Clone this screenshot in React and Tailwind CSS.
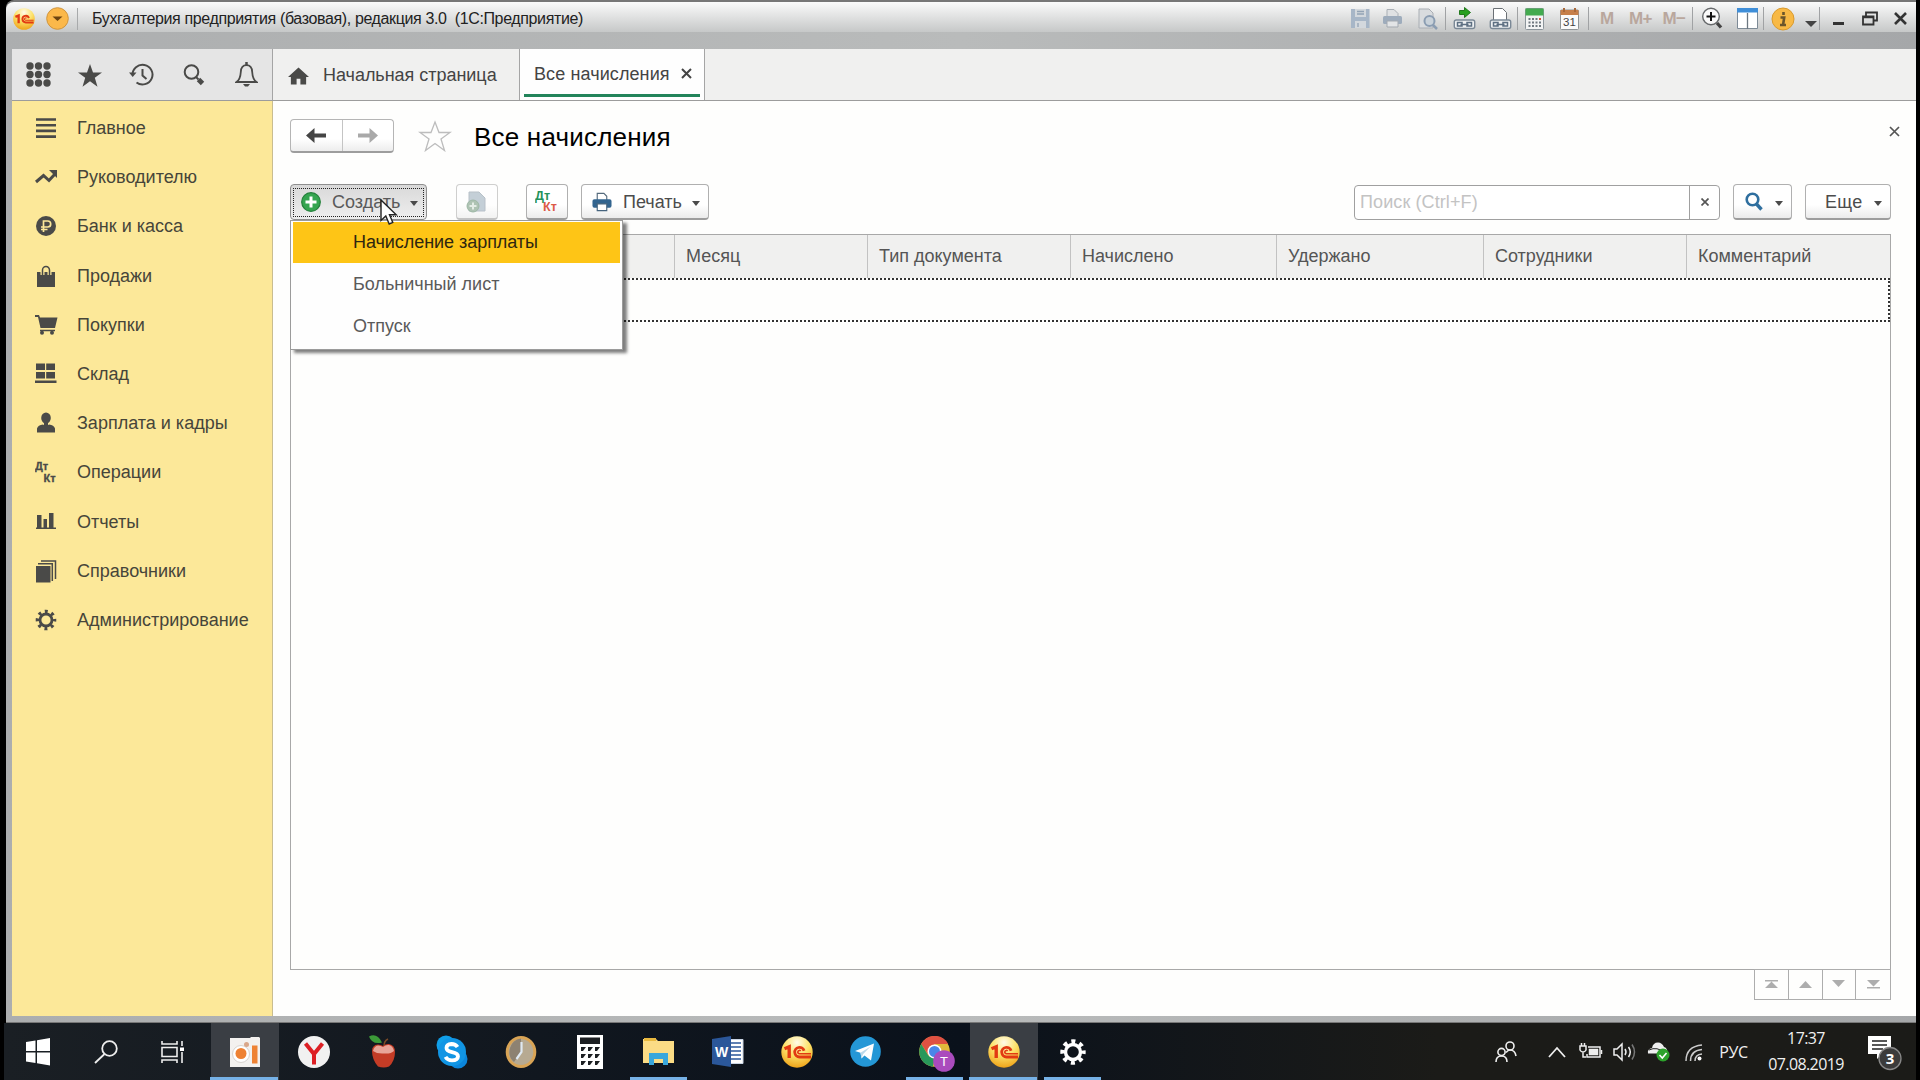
const TextIcon = ({ children, className = '' }) => (
  <span className={`leading-none font-bold ${className}`}>{children}</span>
)

const Logo1C = ({ size }) => (
  <svg width={size} height={size} viewBox="0 0 32 32">
    <defs>
      <radialGradient id="gold" cx="50%" cy="20%" r="80%">
        <stop offset="0" stopColor="#fffbe8" />
        <stop offset=".5" stopColor="#fde26a" />
        <stop offset="1" stopColor="#efa41a" />
      </radialGradient>
    </defs>
    <circle cx="16" cy="16" r="15.700" fill="url(#gold)" />
    <path d="M3.500 12.800 8.200 10.800V22" fill="none" stroke="#e23a12" strokeWidth="3.400" />
    <path d="M30 21H18.500a4.800 4.800 0 1 1 4.600-6.300" fill="none" stroke="#e23a12" strokeWidth="2.800" />
    <path d="M30 17.800H18.500a1.700 1.700 0 1 1 1.200-2.900" fill="none" stroke="#e23a12" strokeWidth="1.600" />
  </svg>
)

const Sep = () => <div className="h-[23px] w-px bg-[#a0a2a4]" />

const Cell = ({ w, children }) => (
  <div className={`flex shrink-0 items-center justify-center ${w}`}>{children}</div>
)

const SaveIcon = () => (
  <svg width="21" height="21" viewBox="0 0 21 21">
    <path d="M1 1h18.500v19H1z" fill="#a7b6c7" />
    <path d="M5 1h11v8H5zM5 13h11v7H5z" fill="#d3d8dd" />
    <path d="M7 3.500h7M7 6h7M8 15v4" stroke="#93a3b5" strokeWidth="1.300" />
  </svg>
)

const PrintGray = () => (
  <svg width="21" height="21" viewBox="0 0 21 21">
    <path d="M5 9V1.500h7l4 4V9" fill="#dfe1e3" stroke="#a9afb5" />
    <rect x="1" y="8" width="19" height="8" rx="1.500" fill="#9eacbc" />
    <path d="M5 13h11v6H5z" fill="#e2e4e6" stroke="#a3a9b0" />
  </svg>
)

const PreviewIcon = () => (
  <svg width="21" height="22" viewBox="0 0 21 22">
    <path d="M2 1h10l4 4v15H2z" fill="#d9dcdf" stroke="#a9aeb4" />
    <circle cx="12.500" cy="13" r="5" fill="#c9d2da" stroke="#8b9db2" strokeWidth="2" />
    <path d="m16 17 4 4" stroke="#8b9db2" strokeWidth="2.500" />
  </svg>
)

const ChainLinks = () => (
  <g>
    <rect x=".8" y="13" width="20.400" height="8.500" rx="2" fill="#eef0f2" stroke="#7a8896" strokeWidth="1.400" />
    <path d="M4 15.500h4.500v3.500H4zM13.500 15.500H18v3.500h-4.500zM7 17.500h8" fill="none" stroke="#5d6f82" strokeWidth="1.500" />
  </g>
)

const LinkGo = () => (
  <svg width="23" height="23" viewBox="0 0 22 23">
    <ChainLinks />
    <path d="M6 3.500h5V.500l6 5-6 5v-3H6z" fill="#27a01f" stroke="#167012" strokeWidth=".9" />
  </svg>
)

const LinkPage = () => (
  <svg width="23" height="23" viewBox="0 0 22 23">
    <path d="M4 16V1.500h9l4 4V16" fill="#fff" stroke="#6b7075" />
    <ChainLinks />
  </svg>
)

const CalcIcon = () => (
  <svg width="19" height="22" viewBox="0 0 19 22">
    <rect x=".5" y=".5" width="18" height="21" rx="1" fill="#f3f4f4" stroke="#8c959b" />
    <path d="M.5.500h18v7H.5z" fill="#43aa4f" />
    <path d="M3.500 11h9M3.500 14.500h9M3.500 18h9" stroke="#707980" strokeWidth="2" strokeDasharray="2 1.500" />
    <path d="M14 11h2" stroke="#d9513f" strokeWidth="2" />
    <path d="M14 14.500h2M14 18h2" stroke="#707980" strokeWidth="2" />
  </svg>
)

const CalendarIcon = () => (
  <svg width="19" height="22" viewBox="0 0 19 22">
    <rect x=".5" y="2" width="18" height="19.500" rx="1" fill="#fbfbfb" stroke="#8f9497" />
    <path d="M.5 2h18v5H.5z" fill="#c67f4a" />
    <path d="M4 0v4M15 0v4" stroke="#a8683a" strokeWidth="2" />
    <text x="9.500" y="17.800" textAnchor="middle" fontSize="11.500" fill="#444">31</text>
  </svg>
)

const ZoomIcon = () => (
  <svg width="22" height="23" viewBox="0 0 22 23">
    <circle cx="10" cy="9.500" r="8.300" fill="#fafafa" stroke="#66696b" strokeWidth="1.400" />
    <path d="M10 5v9M5.500 9.500h9" stroke="#111" strokeWidth="2" />
    <path d="m16 16 4 4.500" stroke="#444" strokeWidth="3.300" />
  </svg>
)

const ColumnsIcon = () => (
  <svg width="21" height="21" viewBox="0 0 21 21">
    <path d="M.5.500h20v20H.5z" fill="#fff" stroke="#7d8a96" />
    <path d="M0 0h21v4.500H0z" fill="#3f8ed8" />
    <path d="M10.500 5v16" stroke="#6c7781" strokeWidth="1.300" />
  </svg>
)

const TitleBar = () => (
  <div className="flex h-[30px] items-center rounded-tl-[8px] bg-linear-to-b from-[#fbfbfb] to-[#c6c8c8]">
    <div className="flex items-center pt-[3px] pl-[7px]">
      <Logo1C size={22} />
      <svg className="ml-[11px]" width="23" height="23" viewBox="0 0 23 23">
        <circle cx="11.500" cy="11.500" r="10.800" fill="#fbb84a" stroke="#cf9540" />
        <path d="M6.500 9.500h10l-5 4.500z" fill="#6b4310" />
      </svg>
      <div className="ml-[8px] h-[22px] w-px bg-[#a8aaab]" />
      <span className="ml-[14px] text-[16px] tracking-[-0.370px] whitespace-pre text-[#222]">
        Бухгалтерия предприятия (базовая), редакция 3.0  (1С:Предприятие)
      </span>
    </div>
    <div className="ml-auto flex items-center pt-[3px]">
      <Cell w="w-[31px]"><SaveIcon /></Cell>
      <Cell w="w-[33px]"><PrintGray /></Cell>
      <Cell w="w-[36px]"><PreviewIcon /></Cell>
      <Sep />
      <Cell w="w-[37px]"><LinkGo /></Cell>
      <Cell w="w-[34px]"><LinkPage /></Cell>
      <Sep />
      <Cell w="w-[33px]"><CalcIcon /></Cell>
      <Cell w="w-[37px]"><CalendarIcon /></Cell>
      <Sep />
      <Cell w="w-[36px]"><TextIcon className="text-[17px] text-[#b9a79d]">M</TextIcon></Cell>
      <Cell w="w-[31px]"><TextIcon className="text-[17px] tracking-[-0.500px] text-[#b9a79d]">M+</TextIcon></Cell>
      <Cell w="w-[36px]"><TextIcon className="text-[17px] tracking-[-0.500px] text-[#b9a79d]">M−</TextIcon></Cell>
      <Sep />
      <Cell w="w-[38px]"><ZoomIcon /></Cell>
      <Cell w="w-[32px]"><ColumnsIcon /></Cell>
      <Sep />
      <Cell w="w-[38px]">
        <svg width="24" height="24" viewBox="0 0 24 24">
          <circle cx="12" cy="12" r="11" fill="#f8b945" stroke="#d99a2e" />
          <path d="M12.500 5v3M9.500 10.500h3.700l-1 6.500M9 18h6" stroke="#6b552b" strokeWidth="2.600" fill="none" />
        </svg>
      </Cell>
      <Cell w="w-[17px]">
        <svg className="mt-[10px]" width="12" height="6" viewBox="0 0 12 6"><path d="M0 0h12L6 6z" fill="#444" /></svg>
      </Cell>
      <Sep />
      <Cell w="w-[36px]">
        <svg className="mt-[9px]" width="11" height="3"><path d="M0 0h11v3H0z" fill="#333" /></svg>
      </Cell>
      <Cell w="w-[28px]">
        <svg width="16" height="15" viewBox="0 0 16 15">
          <path d="M4 5V1.500h11v8h-3" fill="none" stroke="#333" strokeWidth="1.800" />
          <path d="M1 5.500h10.500V13.500H1z" fill="none" stroke="#333" strokeWidth="1.800" />
          <path d="M1 6.500h10" stroke="#333" strokeWidth="1.500" />
        </svg>
      </Cell>
      <Cell w="w-[32px]">
        <svg width="13" height="13" viewBox="0 0 13 13"><path d="m1 1 11 11M12 1 1 12" stroke="#333" strokeWidth="2.600" /></svg>
      </Cell>
    </div>
  </div>
)

const TopTabs = () => (
  <div className="flex h-[52px] border-b border-[#9c9c9c] bg-[#f0f0ef]">
    <div className="flex w-[261px] items-center border-r border-[#a5a5a5] bg-[#e5e5e5] text-[#4a4a48]">
      <Cell w="w-[52px]">
        <svg width="25" height="25" viewBox="0 0 25 25" fill="currentColor">
          {[4, 12.500, 21].map((y) => [4, 12.500, 21].map((x) => <circle key={`${x}-${y}`} cx={x} cy={y} r="3.700" />))}
        </svg>
      </Cell>
      <Cell w="w-[52px]">
        <svg className="mt-[2px]" width="24" height="23" viewBox="0 0 24 23" fill="currentColor"><path d="m12 0 3 8.500h9l-7.200 5.200 2.700 9L12 17.200l-7.500 5.500 2.700-9L0 8.500h9z" /></svg>
      </Cell>
      <Cell w="w-[51px]">
        <svg width="25" height="23" viewBox="0 0 25 23" fill="none" stroke="currentColor" strokeWidth="2">
          <path d="M3.500 12a10 9.800 0 1 1 4 7.500" />
          <path d="M0 9.500h7.500L3.700 14z" fill="currentColor" stroke="none" />
          <path d="M13.500 6v6.500l4 3.500" />
        </svg>
      </Cell>
      <Cell w="w-[53px]">
        <svg width="22" height="22" viewBox="0 0 22 22" fill="none" stroke="currentColor">
          <circle cx="8.500" cy="8" r="6.800" strokeWidth="2" />
          <path d="m13 13 2.500 2.500" strokeWidth="2" />
          <path d="m15.500 15.500 4 4" strokeWidth="4.800" />
        </svg>
      </Cell>
      <Cell w="w-[52px]">
        <svg width="23" height="25" viewBox="0 0 23 25" fill="none" stroke="currentColor" strokeWidth="1.800">
          <path d="M1.500 20c3-2 4-5 4.300-10C6 6 8 3.200 11.500 3.200S17 6 17.200 10c.3 5 1.300 8 4.300 10z" />
          <path d="M11.500 0v3" strokeWidth="2.500" />
          <path d="M8 22h7l-2 2.500h-3z" fill="currentColor" stroke="none" />
        </svg>
      </Cell>
    </div>
    <div className="flex w-[247px] items-center border-r border-[#a5a5a5] pt-[2px] pl-[15px] text-[18px] text-[#444]">
      <svg width="21" height="18" viewBox="0 0 22 18"><path d="M11 0 0 10h3v8h6v-6h4v6h6v-8h3z" fill="#4a4a48" /></svg>
      <span className="ml-[14px] tracking-[-0.030px]">Начальная страница</span>
    </div>
    <div className="flex h-full w-[185px] flex-col border-r border-[#a5a5a5] bg-[#fefefe] px-[4px] pb-[3px]">
      <div className="flex flex-1 items-center pt-[6px] pl-[10px] text-[18px] tracking-[0.100px] text-[#444]">
        Все начисления
        <svg className="mb-[2px] ml-[11px]" width="11" height="11" viewBox="0 0 11 11"><path d="m1 1 9 9M10 1l-9 9" stroke="#444" strokeWidth="2" /></svg>
      </div>
      <div className="h-[3px] bg-[#22845a]" />
    </div>
  </div>
)

const MENU = [
  ['Главное', <path key="i" d="M1 2.500h20M1 8.200h20M1 13.900h20M1 19.600h20" stroke="currentColor" strokeWidth="2.600" />],
  ['Руководителю', (
    <g key="i">
      <path d="m1 16 7.500-6.500 5.500 5L20 8" fill="none" stroke="currentColor" strokeWidth="3" />
      <path d="M14 4h8v8z" fill="currentColor" />
    </g>
  )],
  ['Банк и касса', (
    <g key="i">
      <circle cx="11" cy="11" r="10" fill="currentColor" />
      <path d="M8.500 17V6h4.200a3 3 0 0 1 0 6H6M6 14.500h6.500" fill="none" stroke="#fce899" strokeWidth="1.700" />
    </g>
  )],
  ['Продажи', (
    <g key="i">
      <path d="M2 7h18v15H2z" fill="currentColor" />
      <path d="M7.500 10V5a3.500 3.500 0 0 1 7 0v5" fill="none" stroke="#fce899" strokeWidth="4" />
      <path d="M7.500 10V5a3.500 3.500 0 0 1 7 0v5" fill="none" stroke="currentColor" strokeWidth="1.500" />
    </g>
  )],
  ['Покупки', (
    <g key="i">
      <path d="M0 1h4l1 2.500h17.500L20 14H5.500L3 3H0z" fill="currentColor" />
      <path d="M5 16.500h15" stroke="currentColor" strokeWidth="1.500" />
      <circle cx="7" cy="18.800" r="2" fill="currentColor" />
      <circle cx="17" cy="18.800" r="2" fill="currentColor" />
    </g>
  )],
  ['Склад', <path key="i" d="M1 .500h9V7H1zM11.200.500H20V7h-8.800zM1 9h9v6.500H1zM11.200 9H20v6.500h-8.800zM0 17.500h21.500V20H0z" fill="currentColor" />],
  ['Зарплата и кадры', (
    <g key="i" fill="currentColor">
      <ellipse cx="11" cy="6" rx="4.800" ry="5.500" />
      <path d="M9 10h4v4H9z" />
      <path d="M2 20.500v-4Q3 13 8 12.500q3 2.500 6 0 5 .5 6 4v4z" />
    </g>
  )],
  ['Операции', (
    <g key="i" fill="currentColor" stroke="currentColor" strokeWidth=".3" fontSize="11" fontWeight="bold">
      <text x="0" y="8.500">Дт</text>
      <text x="8.500" y="20.500">Кт</text>
    </g>
  )],
  ['Отчеты', <path key="i" d="M2 4h4.500v13H2zM8.500 8H12v9H8.500zM14 2h4.500v15H14zM1 16.500h20v1.600H1z" fill="currentColor" />],
  ['Справочники', (
    <g key="i">
      <path d="M1 6h14.500v16.500H1z" fill="currentColor" />
      <path d="M3 3.800h14.300V21M6 1h14.500v18" fill="none" stroke="currentColor" strokeWidth="1.500" />
    </g>
  )],
  ['Администрирование', (
    <g key="i" stroke="currentColor" fill="none">
      <circle cx="11" cy="11" r="6" strokeWidth="2.800" />
      <circle cx="11" cy="11" r="8.500" strokeWidth="3.600" strokeDasharray="2.900 3.776" strokeDashoffset="1.450" />
    </g>
  )],
]

const Sidebar = () => (
  <nav className="flex w-[261px] flex-col border-r border-[#c9bd90] bg-[#fce899] pt-[3px]">
    {MENU.map(([label, icon]) => (
      <div key={label} className="flex h-[49.200px] items-center pl-[23px] text-[18px] text-[#4a4a48]">
        <svg width="23" height="23" viewBox="0 0 23 23">{icon}</svg>
        <span className="ml-[19px] text-[#46453a]">{label}</span>
      </div>
    ))}
  </nav>
)

const Caret = () => (
  <svg width="8" height="5" viewBox="0 0 8 5"><path d="M0 0h8L4 5z" fill="#4a4a4a" /></svg>
)

const Button = ({ className = '', children }) => (
  <div className={`flex h-[36px] items-center rounded-[4px] border border-b-2 border-[#b0b0b0] border-b-[#9d9d9d] bg-linear-to-b from-white from-60% to-[#ebebeb] text-[18px] text-[#4c4c4c] ${className}`}>
    {children}
  </div>
)

const Cursor = () => (
  <svg className="absolute top-[14px] left-[89px] z-20" width="18" height="27" viewBox="0 0 18 27">
    <path d="M1 1v20.500l4.800-4.500 3.400 8 3.600-1.600L9.500 15.800h6.700z" fill="#fff" stroke="#222" strokeWidth="1.400" />
  </svg>
)

const CreateMenu = () => (
  <div className="absolute top-[35px] left-[-1px] z-10 w-[333px] border border-[#9b9b9b] bg-[#fefefe] px-[2px] pt-px pb-[2px] text-[18px] text-[#5a5a5a] shadow-[4px_3px_3px_rgba(0,0,0,0.5)]">
    <div className="flex h-[41px] items-center bg-[#fec516] pl-[60px] tracking-[-0.050px] text-[#2e2710]">Начисление зарплаты</div>
    <div className="flex h-[42px] items-center pl-[60px]">Больничный лист</div>
    <div className="flex h-[42px] items-center pl-[60px]">Отпуск</div>
  </div>
)

const Heading = () => (
  <div className="flex h-[34px] items-center">
    <div className="flex h-[34px] w-[104px] rounded-[4px] border border-b-2 border-[#b5b5b5] border-b-[#9d9d9d] bg-linear-to-b from-white from-60% to-[#ededed]">
      <div className="flex flex-1 items-center justify-center border-r border-[#c4c4c4]">
        <svg width="20" height="15" viewBox="0 0 20 15"><path d="M0 7.500 8.500 0v5.500H20v4H8.500V15z" fill="#454545" /></svg>
      </div>
      <div className="flex flex-1 items-center justify-center">
        <svg width="20" height="15" viewBox="0 0 20 15"><path d="M20 7.500 11.500 0v5.500H0v4h11.500V15z" fill="#a9a9a9" /></svg>
      </div>
    </div>
    <svg className="ml-[24px]" width="34" height="32" viewBox="0 0 34 32">
      <path d="m17 2 4 10.500h11L23 19l3.500 11.500L17 23.500l-9.500 7L11 19 2 12.500h11z" fill="none" stroke="#bdbdbd" strokeWidth="1.300" />
    </svg>
    <h1 className="mt-[2px] ml-[22px] text-[26px] tracking-[0.200px] text-black">Все начисления</h1>
    <svg className="mr-[16px] mb-[9px] ml-auto" width="11" height="11" viewBox="0 0 11 11"><path d="m1 1 9 9M10 1l-9 9" stroke="#555" strokeWidth="1.700" /></svg>
  </div>
)

const Toolbar = () => (
  <div className="mt-[31px] flex h-[36px] items-center">
    <div className="relative flex h-[36px] w-[137px] items-center rounded-[4px] border border-[#8f8f8f] bg-linear-to-b from-[#d9d9d9] to-[#eeeeee]">
      <div className="m-[2px] flex h-[29px] flex-1 items-center border border-dotted border-[#222] pl-[7px] text-[18px] text-[#5a5a5a]">
        <svg width="20" height="20" viewBox="0 0 20 20">
          <circle cx="10" cy="10" r="9.300" fill="#35a550" stroke="#23803a" strokeWidth="1.200" />
          <path d="M10 4.500v11M4.500 10h11" stroke="#fff" strokeWidth="3" />
        </svg>
        <span className="ml-[11px]">Создать</span>
        <span className="mt-[3px] ml-auto pr-[5px]"><Caret /></span>
      </div>
      <Cursor />
      <CreateMenu />
    </div>
    <Button className="ml-[29px] w-[42px] justify-center opacity-60">
      <svg className="mr-[2px]" width="20" height="22" viewBox="0 0 20 22">
        <path d="M3 1h10l6 6v13H3z" fill="#9fb0bf" stroke="#8999a6" />
        <circle cx="7" cy="15" r="6" fill="#7a9c83" stroke="#5f8a6c" />
        <path d="M7 11.500v7M3.500 15h7" stroke="#d5e2d8" strokeWidth="2" />
      </svg>
    </Button>
    <Button className="ml-[28px] w-[42px] justify-center">
      <svg width="24" height="24" viewBox="0 0 24 24" fontSize="12.500" fontWeight="bold">
        <text x="0" y="9.500" fill="#24925a">Дт</text>
        <text x="8" y="20.500" fill="#dd5a48">Кт</text>
      </svg>
    </Button>
    <Button className="ml-[13px] w-[128px] pl-[10px]">
      <svg width="20" height="20" viewBox="0 0 21 20">
        <path d="M5.500 8V1h7l3 3v4" fill="#fff" stroke="#566b7d" strokeWidth="1.200" />
        <rect x=".5" y="7" width="20" height="9" rx="2" fill="#32648f" />
        <path d="M5.500 12h10v7h-10z" fill="#fff" stroke="#46647e" strokeWidth="1.200" />
      </svg>
      <span className="mt-[2px] ml-[11px]">Печать</span>
      <span className="mt-[3px] ml-auto pr-[8px]"><Caret /></span>
    </Button>
    <div className="ml-auto flex h-[35px] w-[366px] rounded-[4px] border border-[#a0a0a0] bg-white">
      <div className="flex flex-1 items-center border-r border-[#a0a0a0] pl-[5px] text-[18px] tracking-[0.100px] text-[#c3c3c3]">Поиск (Ctrl+F)</div>
      <div className="flex w-[29px] items-center justify-center">
        <svg width="8" height="8" viewBox="0 0 8 8"><path d="m.5.500 7 7M7.500.500l-7 7" stroke="#555" strokeWidth="1.700" /></svg>
      </div>
    </div>
    <Button className="ml-[13px] w-[59px] pl-[11px]">
      <svg width="18" height="19" viewBox="0 0 18 19" fill="none" stroke="#2f6f9f">
        <circle cx="7.500" cy="7.500" r="5.800" strokeWidth="2.600" />
        <path d="m11.500 12 5 5.500" strokeWidth="3.400" />
      </svg>
      <span className="mt-[4px] ml-auto pr-[8px]"><Caret /></span>
    </Button>
    <Button className="mr-[25px] ml-[13px] w-[86px] pl-[19px]">
      <span className="mt-[2px] tracking-[0.300px]">Еще</span>
      <span className="mt-[4px] ml-auto pr-[8px]"><Caret /></span>
    </Button>
  </div>
)

const COLUMNS = [
  ['', 'w-[384px]'],
  ['Месяц', 'w-[193px]'],
  ['Тип документа', 'w-[203px]'],
  ['Начислено', 'w-[206px]'],
  ['Удержано', 'w-[207px]'],
  ['Сотрудники', 'w-[203px]'],
  ['Комментарий', 'flex-1'],
]

const PAGER = [
  'M0 0h13v1.500H0zM6.500 1.500 13 8H0z',
  'M6.500 1 13 8H0z',
  'M0 0h13L6.500 7z',
  'M0 0h13L6.500 6.500zM0 7h13v1.500H0z',
]

const Table = () => (
  <div className="mt-[14px] mr-[25px] flex flex-1 flex-col">
    <div className="flex h-[736px] flex-col border border-[#a8a8a8]">
      <div className="flex h-[43px] bg-[#f0f0ef] text-[18px] text-[#555]">
        {COLUMNS.map(([name, w], i) => (
          <div key={i} className={`flex items-center border-r border-[#c2c2c2] pb-px pl-[11px] last:border-r-0 ${w}`}>{name}</div>
        ))}
      </div>
      <div className="h-[44px] border-2 border-dotted border-[#333]" />
    </div>
    <div className="-mt-px flex justify-end">
      <div className="flex h-[31px] border border-[#adadad]">
        {PAGER.map((d) => (
          <div key={d} className="flex w-[33.750px] items-center justify-center border-r border-[#adadad] last:border-r-0">
            <svg width="13" height="9" viewBox="0 0 13 9"><path d={d} fill="#adadad" /></svg>
          </div>
        ))}
      </div>
    </div>
  </div>
)

const TASKS = [
  { icon: (
    <svg width="30" height="30" viewBox="0 0 30 30">
      <path d="M0 1h20l1-1h8l1 1v29H0z" fill="#f3f1ef" />
      <circle cx="11" cy="17" r="8.500" fill="#fff" stroke="#d8d4d0" />
      <circle cx="11" cy="16.500" r="5.500" fill="#ee8234" />
      <circle cx="16.500" cy="7.500" r="2.500" fill="#d9a78a" />
      <path d="M22 8.500h5.500v18H22z" fill="#ee8234" />
    </svg>
  ), active: true },
  { icon: (
    <svg width="32" height="38" viewBox="0 0 32 38">
      <ellipse cx="16" cy="19" rx="16" ry="16" fill="#f1f1f1" />
      <path d="m7.500 10.500 8.500 10.500 8.500-10.500M16 20v11.500" fill="none" stroke="#dd1f24" strokeWidth="4" />
    </svg>
  ) },
  { icon: (
    <svg width="30" height="38" viewBox="0 0 30 38">
      <path d="M1 3.500q8-4 13 6Q4 12 1 3.500z" fill="#3c9a38" />
      <path d="M16 13q0-5 4-7" fill="none" stroke="#7a4a26" strokeWidth="1.500" />
      <path d="M4 18q0-6 6-6.500 3 0 5 1.500 3-2.500 6-2 6 1 6 8 0 9-6 14.500-5 2-11 0-6-7-6-15.500z" fill="#c43c26" />
      <path d="M5 18q1-5 5-5.500 3 0 5 1.500 3-2.500 6-2 4 1 5 6-3 3-10 2.500Q9 21 5 18z" fill="#e8a598" />
    </svg>
  ) },
  { icon: (
    <svg width="32" height="38" viewBox="0 0 32 38">
      <circle cx="10" cy="12" r="9.500" fill="#109fe8" />
      <circle cx="22" cy="26" r="9.500" fill="#0b86dc" />
      <circle cx="16" cy="19" r="14" fill="#1195e4" />
      <path d="M21.500 14q-2-3-6-3-5 .3-5 4 0 3 5.500 4.200 6 1.300 6 4.200-.3 4-6 4-4.500 0-6.500-3.500" fill="none" stroke="#fff" strokeWidth="3.800" />
    </svg>
  ) },
  { icon: (
    <svg width="32" height="34" viewBox="0 0 32 34">
      <ellipse cx="16" cy="17" rx="13.800" ry="14.500" fill="#b7aa92" stroke="#d9a455" strokeWidth="3" />
      <path d="M16 17V3.500A13.500 13.500 0 0 0 9 27z" fill="#8d8272" />
      <path d="M16.500 7v10l-5 7" fill="none" stroke="#dfe9f2" strokeWidth="2.200" />
    </svg>
  ) },
  { icon: (
    <svg width="26" height="34" viewBox="0 0 26 34">
      <path d="M0 0h26v34H0z" fill="#fff" />
      <path d="M3 2.500h20v6.500H3z" fill="#1c1f22" />
      <path d="M4 12h5l-3 4H4zM11 12h5l-3 4h-2zM18 12h5l-3 4h-2zM4 19h5l-3 4H4zM11 19h5l-3 4h-2zM18 19h5l-3 4h-2zM4 26h5l-3 4H4zM11 26h5l-3 4h-2zM18 26h5l-3 4h-2z" fill="#1c1f22" />
    </svg>
  ) },
  { icon: (
    <svg width="31" height="27" viewBox="0 0 31 27">
      <path d="M0 1h13l2 2h16v22H0z" fill="#fbdc85" />
      <path d="M1 0h12v3H1z" fill="#e9b93f" />
      <path d="M6 27V15h19v12h-5v-6h-9v6z" fill="#3aa7dc" />
    </svg>
  ), open: true },
  { icon: (
    <svg width="32" height="31" viewBox="0 0 32 31">
      <path d="M15 3.500h16v24H15z" fill="#fff" stroke="#c9d4e4" />
      <path d="M19 7h10M19 11h10M19 15h10M19 19h10M19 23h10" stroke="#2b579a" strokeWidth="1.500" />
      <path d="M0 3 19 0v31L0 28z" fill="#2b579a" />
      <text x="9.500" y="20.500" textAnchor="middle" fontSize="14" fontWeight="bold" fill="#fff">W</text>
    </svg>
  ) },
  { icon: <Logo1C size={32} /> },
  { icon: (
    <svg width="31" height="31" viewBox="0 0 31 31">
      <circle cx="15.500" cy="15.500" r="15.300" fill="#2497d6" />
      <path d="m5 15 19-7.500-3 17-6.500-5-3 3-1-5.800z" fill="#fff" />
      <path d="m10.500 16.700 10-6.200-7.500 7.700-1.500 4.300z" fill="#bcd9ea" />
    </svg>
  ) },
  { icon: (
    <svg className="mt-[5px] ml-[5px]" width="36" height="36" viewBox="0 0 36 36">
      <circle cx="15.500" cy="15.500" r="15.300" fill="#e2b93b" />
      <path d="M2.200 8a15.300 15.300 0 0 1 27 0H15.500L9.500 19z" fill="#df5142" />
      <path d="M2.200 8 9.300 19.500l6.500 3.500-2 7.700A15.300 15.300 0 0 1 2.200 8z" fill="#28985a" />
      <circle cx="15.500" cy="15.500" r="7" fill="#fff" />
      <circle cx="15.500" cy="15.500" r="5.500" fill="#4a86e8" />
      <circle cx="25" cy="25" r="10.800" fill="#aa4bbd" />
      <text x="25" y="29.500" textAnchor="middle" fontSize="13" fill="#fff">T</text>
    </svg>
  ), open: true },
  { icon: <Logo1C size={32} />, active: true },
  { icon: (
    <svg width="26" height="26" viewBox="0 0 26 26" fill="none" stroke="#fff">
      <circle cx="13" cy="13" r="7.500" strokeWidth="3.400" />
      <circle cx="13" cy="13" r="10.500" strokeWidth="4.400" strokeDasharray="4 4.247" strokeDashoffset="2" />
    </svg>
  ), open: true },
]

const TaskButton = ({ icon, active, open }) => (
  <div className="relative flex w-[69px] items-center justify-center">
    <div className={`flex h-full w-[68px] items-center justify-center ${active ? 'bg-[#3a3e44]' : ''}`}>{icon}</div>
    {active && <div className="absolute bottom-0 left-0 h-[3px] w-[68px] bg-[#76b1e6]" />}
    {open && <div className="absolute bottom-0 left-[6px] h-[3px] w-[57px] bg-[#76b1e6]" />}
  </div>
)

const Tray = () => (
  <div className="ml-auto flex items-center font-['Open_Sans',sans-serif] text-[16px] text-[#f0f0f0]">
    <svg width="22" height="22" viewBox="0 0 22 22" fill="none" stroke="#eee" strokeWidth="1.600">
      <circle cx="15" cy="5" r="4" />
      <circle cx="6.500" cy="11" r="3.600" />
      <path d="M1 21q0-6 5.500-6t5.500 6M11 11.500q2-2.500 4-2.500 5 0 6 6" />
    </svg>
    <svg className="ml-[31px]" width="18" height="12" viewBox="0 0 18 12"><path d="m1 11 8-9 8 9" fill="none" stroke="#eee" strokeWidth="1.800" /></svg>
    <svg className="ml-[13px]" width="24" height="18" viewBox="0 0 24 18" fill="none" stroke="#eee" strokeWidth="1.500">
      <path d="M9 4h12v10H8v-3" />
      <path d="M10.500 6.500h8v5h-8z" fill="#eee" />
      <path d="M22.500 7v4M1 3h6v4q-1 2-3 2T1 7zM2.500 0v3M5.500 0v3M4 9v5h3" />
    </svg>
    <svg className="ml-[10px]" width="24" height="20" viewBox="0 0 24 20" fill="none" stroke="#eee" strokeWidth="1.500">
      <path d="M1 7h3l5-5v16l-5-5H1z" />
      <path d="M12 7q2 3 0 6M15.500 5q3.500 5 0 10" />
      <path d="M19 2.500q5 7.500 0 15" stroke="#777" />
    </svg>
    <svg className="ml-[10px]" width="24" height="20" viewBox="0 0 24 20">
      <path d="M1 11.500q-1-4.500 4-5.500 1-5.500 6-5.500 4 0 6 4.500 4 1 3 6.500z" fill="#eee" />
      <path d="M2 8q8-4 16 3" stroke="#222" fill="none" />
      <circle cx="16" cy="13" r="6.500" fill="#2ca22b" />
      <path d="m12.500 13 2.800 3 4.200-5" fill="none" stroke="#fff" strokeWidth="1.600" />
    </svg>
    <svg className="ml-[13px]" width="20" height="20" viewBox="0 0 20 20" fill="none" stroke="#ccc" strokeWidth="1.500">
      <circle cx="15.500" cy="16.500" r="2" fill="#fff" stroke="none" />
      <path d="M11 19q0-6.500 7-7M6.500 19q0-10.500 11.500-11.500M2 19Q2 4.500 18 3" />
    </svg>
    <span className="ml-[14px] w-[31px] text-center tracking-[-0.300px]">РУС</span>
    <div className="mb-[2px] ml-[16px] flex w-[82px] flex-col items-center text-[16px] leading-[26px] tracking-[-0.600px]">
      <span>17:37</span>
      <span>07.08.2019</span>
    </div>
    <svg className="mr-[13px] ml-[20px]" width="36" height="38" viewBox="0 0 36 38">
      <path d="M1 3h23v18h-9l-5 5v-5H1z" fill="#fff" />
      <path d="M5 8h15M5 12h15M5 16h11" stroke="#222" strokeWidth="1.500" />
      <circle cx="23" cy="25.500" r="11" fill="#3b3b3b" stroke="#888" strokeWidth="1.300" />
      <text x="23" y="31" textAnchor="middle" fontSize="15" fontWeight="bold" fill="#fff">3</text>
    </svg>
  </div>
)

const Taskbar = () => (
  <div className="ml-[4px] flex h-[57px] w-[1912px] bg-linear-to-r from-[#1a1f24] from-0% via-[#0a111b] via-50% to-[#1b1b18] to-75%">
    <Cell w="w-[68px]">
      <svg width="24" height="28" viewBox="0 0 24 28"><path d="m0 4 9.500-1.500V13H0zM11 2.200 24 0v13H11zM0 14.500h9.500V25L0 23.500zM11 14.500h13v13L11 25.300z" fill="#fff" /></svg>
    </Cell>
    <Cell w="w-[67px]">
      <svg width="24" height="24" viewBox="0 0 24 24" fill="none" stroke="#eee" strokeWidth="1.800"><circle cx="15.500" cy="8.500" r="7.300" /><path d="m10.500 14-9.500 9" /></svg>
    </Cell>
    <Cell w="w-[67px]">
      <svg width="24" height="22" viewBox="0 0 24 22" fill="none" stroke="#eee" strokeWidth="1.600">
        <path d="M1 0v3h15V0M1 22v-3h15v3M1 6.500h15v9H1zM21 0v5M21 11v11" />
        <path d="M19 6.500h4v3.500h-4z" fill="#fff" stroke="none" />
      </svg>
    </Cell>
    <div className="ml-[4px] flex">
      {TASKS.map((task, i) => <TaskButton key={i} {...task} />)}
    </div>
    <Tray />
  </div>
)

const App = () => (
  <div className="flex h-[1080px] w-[1920px] flex-col overflow-hidden bg-black font-['Liberation_Sans',sans-serif]">
    <div className="mr-[4px] ml-[6px] flex h-[1023px] flex-col rounded-tl-[8px] border-t-2 border-b border-[#777] bg-linear-to-r from-[#acaeaf] via-[#b9bbbb] to-[#a5a7a9] pb-[6px]">
      <TitleBar />
      <div className="mt-[17px] ml-[6px] flex flex-1 flex-col">
        <TopTabs />
        <div className="flex flex-1">
          <Sidebar />
          <main className="flex flex-1 flex-col bg-[#fefefd] pt-[18px] pl-[17px]">
            <Heading />
            <Toolbar />
            <Table />
          </main>
        </div>
      </div>
    </div>
    <Taskbar />
  </div>
)

export default App
